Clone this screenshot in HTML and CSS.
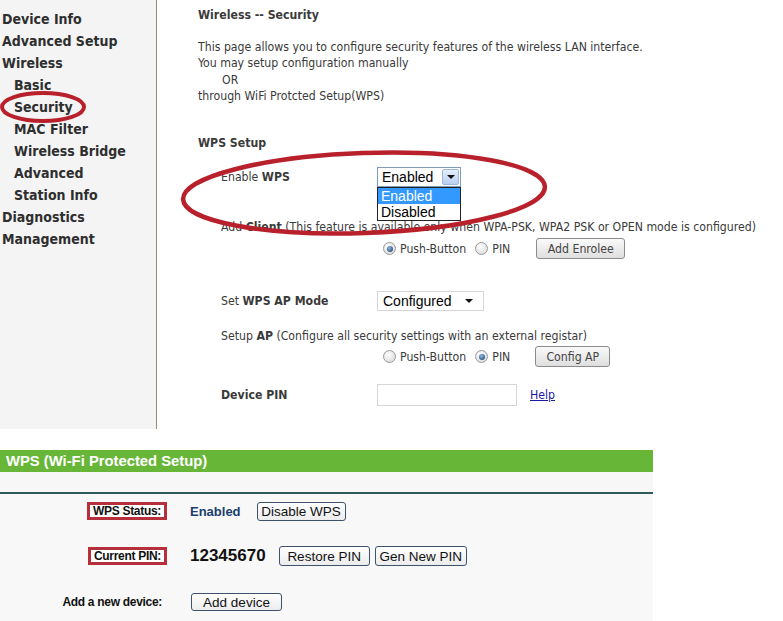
FILE: index.html
```html
<!DOCTYPE html>
<html>
<head>
<meta charset="utf-8">
<link rel="stylesheet" href="styles.css">
</head>
<body>
<div class="page">
  <div class="top">
    <nav class="side">
      <div class="nav">Device Info</div>
      <div class="nav">Advanced Setup</div>
      <div class="nav">Wireless</div>
      <div class="nav sub">Basic</div>
      <div class="nav sub">Security</div>
      <div class="nav sub">MAC Filter</div>
      <div class="nav sub">Wireless Bridge</div>
      <div class="nav sub">Advanced</div>
      <div class="nav sub">Station Info</div>
      <div class="nav">Diagnostics</div>
      <div class="nav">Management</div>
    </nav>
    <main class="main">
      <div class="title">Wireless -- Security</div>
      <div class="para">This page allows you to configure security features of the wireless LAN interface.<br>You may setup configuration manually<br><span class="or">OR</span><br>through WiFi Protcted Setup(WPS)</div>
      <div class="title wps-title">WPS Setup</div>
      <div class="row r-enable">
        <div class="lbl">Enable <b>WPS</b></div>
        <div class="sel sel-xp"><span class="sel-text">Enabled</span><span class="sel-btn"><span class="tri"></span></span>
          <div class="droplist">
            <div class="opt opt-on">Enabled</div>
            <div class="opt">Disabled</div>
          </div>
        </div>
      </div>
      <div class="line r-client">Add <b>Client</b> (This feature is available only when WPA-PSK, WPA2 PSK or OPEN mode is configured)</div>
      <div class="radios r-radio1">
        <span class="radio on"></span><span class="rtxt">Push-Button</span>
        <span class="radio"></span><span class="rtxt">PIN</span>
        <span class="btn btn-enrolee">Add Enrolee</span>
      </div>
      <div class="row r-mode">
        <div class="lbl">Set <b>WPS AP Mode</b></div>
        <div class="sel sel-flat"><span class="sel-text">Configured</span><span class="tri"></span></div>
      </div>
      <div class="line r-setup">Setup <b>AP</b> (Configure all security settings with an external registar)</div>
      <div class="radios r-radio2">
        <span class="radio"></span><span class="rtxt">Push-Button</span>
        <span class="radio on"></span><span class="rtxt">PIN</span>
        <span class="btn btn-config">Config AP</span>
      </div>
      <div class="row r-pin">
        <div class="lbl"><b>Device PIN</b></div>
        <div class="input"></div>
        <a class="help">Help</a>
      </div>
    </main>
  </div>

  <section class="wps">
    <div class="wps-bar">WPS (Wi-Fi Protected Setup)</div>
    <div class="wps-strip"></div>
    <div class="wps-body">
      <div class="wrow w1">
        <div class="wlbl"><span class="boxed">WPS Status:</span></div>
        <div class="wval"><span class="enabled">Enabled</span><span class="wbtn b-disable">Disable WPS</span></div>
      </div>
      <div class="wrow w2">
        <div class="wlbl"><span class="boxed">Current PIN:</span></div>
        <div class="wval"><span class="pin">12345670</span><span class="wbtn b-restore">Restore PIN</span><span class="wbtn b-gen">Gen New PIN</span></div>
      </div>
      <div class="wrow w3">
        <div class="wlbl"><span class="plain">Add a new device:</span></div>
        <div class="wval"><span class="wbtn b-add">Add device</span></div>
      </div>
    </div>
  </section>

  <svg class="mark mark-side" width="100" height="44" viewBox="0 0 100 44">
    <ellipse cx="44" cy="22" rx="41" ry="14" fill="none" stroke="#b8202b" stroke-width="4"/>
  </svg>
  <svg class="mark mark-wps" width="390" height="100" viewBox="0 0 390 100">
    <ellipse cx="186" cy="49" rx="181" ry="40" fill="none" stroke="#b8202b" stroke-width="4.5" transform="rotate(-2 186 49)"/>
  </svg>
</div>
</body>
</html>
```

FILE: styles.css
```css
* { box-sizing: border-box; }
html, body { margin: 0; padding: 0; background: #fff; }
.page {
  position: relative;
  width: 783px;
  height: 621px;
  overflow: hidden;
  font-family: "DejaVu Sans Condensed", "DejaVu Sans", sans-serif;
  color: #3a3a3a;
}
.top { display: flex; height: 429px; }
.side {
  width: 157px;
  flex: none;
  background: #f4f4f4;
  border-right: 1px solid #a08676;
  padding-top: 8px;
}
.nav {
  font-weight: bold;
  font-size: 14px;
  line-height: 22px;
  height: 22px;
  padding-left: 2px;
  color: #2e2e2e;
  white-space: nowrap;
}
.nav.sub { padding-left: 14px; }

.main { flex: 1; padding-left: 41px; font-size: 12.2px; }
.title { font-weight: bold; line-height: 16px; margin-top: 7px; color: #3a3a3a; }
.para { margin-top: 16px; line-height: 16.3px; }
.or { padding-left: 24px; }
.wps-title { margin-top: 31px; }

.row { display: flex; align-items: center; padding-left: 23px; }
.lbl { width: 156px; flex: none; }
.r-enable { margin-top: 16px; height: 20px; }
.r-mode { margin-top: 32px; height: 20px; }
.r-pin { margin-top: 17px; height: 22px; }

.line { padding-left: 23px; line-height: 16px; white-space: nowrap; }
.r-client { margin-top: 32px; }
.r-setup { margin-top: 17px; }

.radios { display: flex; align-items: center; padding-left: 185px; height: 21px; }
.r-radio1 { margin-top: 3px; }
.r-radio2 { margin-top: 2px; }
.radio {
  width: 13px; height: 13px; border-radius: 50%;
  border: 1px solid #9a9a9a;
  background: radial-gradient(circle at 40% 35%, #ffffff 0%, #dcdcdc 80%);
  flex: none;
  position: relative;
}
.radio.on::after {
  content: ""; position: absolute; left: 2.5px; top: 2.5px; width: 6px; height: 6px; border-radius: 50%;
  background: radial-gradient(circle at 40% 35%, #8fb8e0 0%, #2a4f7e 80%);
}
.rtxt { margin-left: 4px; margin-right: 9px; }
.btn {
  display: inline-flex; align-items: center; justify-content: center;
  height: 21px;
  border: 1px solid #8b8b8b;
  border-radius: 3px;
  background: linear-gradient(#fafafa, #dedede);
  color: #444;
}
.btn-enrolee { width: 89px; margin-left: 17px; }
.btn-config { width: 75px; margin-left: 16px; }

.sel {
  position: relative;
  display: flex; align-items: center;
  height: 20px;
  font-family: "Liberation Sans", Arial, sans-serif;
  font-size: 14px;
  color: #000;
  background: #fff;
}
.sel-xp { width: 84px; border: 1px solid #7f9db9; padding-left: 4px; }
.sel-xp .sel-text { flex: 1; }
.sel-btn {
  width: 17px; height: 16px; margin-right: 1px;
  border: 1px solid #9db6d8; border-radius: 2px;
  background: linear-gradient(#e4eefc, #b9cff2);
  display: flex; align-items: center; justify-content: center;
}
.tri { width: 0; height: 0; border-left: 4px solid transparent; border-right: 4px solid transparent; border-top: 4px solid #111; }
.sel-flat { width: 107px; border: 1px solid #d6d6d6; padding-left: 5px; }
.sel-flat .sel-text { flex: 1; }
.sel-flat .tri { margin-right: 10px; }
.droplist {
  position: absolute; left: -1px; top: 19px;
  width: 84px;
  border: 1px solid #222;
  background: #fff;
  z-index: 2;
}
.opt { height: 16px; line-height: 16px; padding-left: 3px; }
.opt-on { background: #3399ff; color: #fff; }

.input { width: 140px; height: 22px; border: 1px solid #d6d6d6; background: #fff; }
.help { margin-left: 13px; color: #1a1aa6; text-decoration: underline; }

.wps {
  margin-top: 21px;
  width: 653px;
  height: 171px;
  background: #f8f8f8;
  font-family: "Liberation Sans", Arial, sans-serif;
}
.wps-bar {
  height: 22px; background: #67b637; color: #fff;
  font-weight: bold; font-size: 14.8px; line-height: 22px; padding-left: 6px;
}
.wps-strip { height: 22px; border-bottom: 2px solid #2d5a56; background: #f7f7f7; }
.wps-body { padding-top: 7px; }
.wrow { display: flex; align-items: center; }
.w1 { height: 20px; }
.w2 { height: 20px; margin-top: 25px; }
.w3 { height: 20px; margin-top: 26px; }
.wlbl { width: 167px; flex: none; text-align: right; font-size: 12px; font-weight: bold; color: #111; }
.boxed { display: inline-block; border: 3px solid #b5303a; background: #fff; padding: 0 3px; line-height: 12px; letter-spacing: -0.3px; }
.plain { padding-right: 5px; letter-spacing: -0.3px; }
.wval { display: flex; align-items: center; padding-left: 23px; }
.enabled { font-weight: bold; font-size: 13px; color: #1c3d6e; margin-right: 16px; }
.pin { font-weight: bold; font-size: 17px; color: #111; margin-right: 13px; }
.wbtn {
  display: inline-flex; align-items: center; justify-content: center;
  height: 20px;
  border: 1px solid #3e536b;
  border-radius: 3px;
  background: linear-gradient(#ffffff, #ececec);
  font-size: 13.5px; color: #111;
}
.b-disable { width: 89px; height: 19px; }
.b-restore { width: 91px; }
.b-gen { width: 92px; margin-left: 5px; }
.b-add { width: 91px; height: 18px; margin-left: 1px; }

.mark { position: absolute; pointer-events: none; }
.mark-side { left: -1px; top: 85px; }
.mark-wps { left: 178px; top: 144px; }
```
